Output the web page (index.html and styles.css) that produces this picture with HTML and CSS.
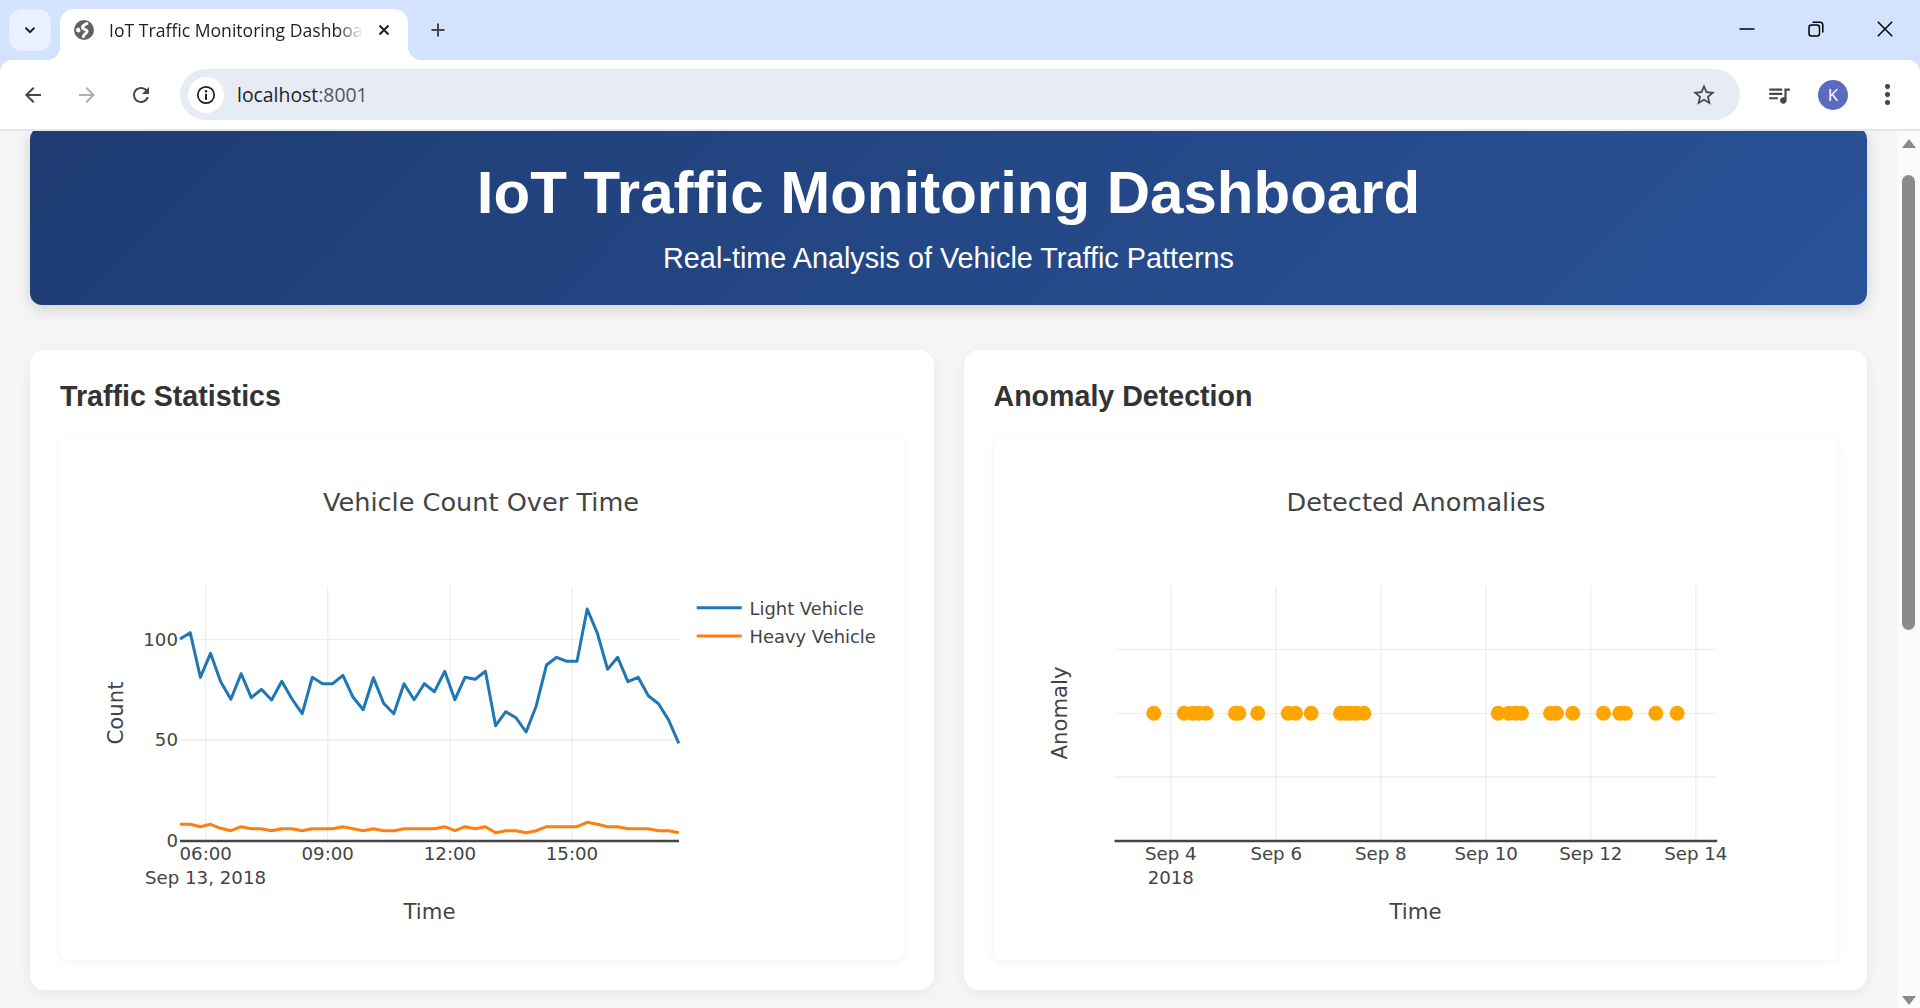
FILE: index.html
```html
<!DOCTYPE html>
<html lang="en">
  <head>
    <meta charset="UTF-8" />
    <title>IoT Traffic Monitoring Dashboard</title>
    <link rel="stylesheet" href="styles.css">
  </head>
  <body>
    <div class="tabstrip">
      <div class="tabsearch">
        <svg width="16" height="16" viewBox="0 0 16 16"><path class="chev" d="M3.5 5.8 8 10.2l4.5-4.4" /></svg>
      </div>
      <div class="tab">
        <svg class="favicon" width="20" height="20" viewBox="0 0 18 18">
          <circle cx="9" cy="9" r="9" fill="#5f6368" />
          <path class="swoosh" d="M12.500 2.600C10.500 4.200 7.600 4.400 7.600 6.600 7.600 8.800 11.400 8 11.800 10 12.200 11.800 9.200 12.400 8.600 14.400L8.200 16" />
          <path fill="#fff" d="M1.800 7.800 4.600 6.600 6 9.800 4.200 11.400 2 10.400z" />
        </svg>
        <span class="tabtitle">IoT Traffic Monitoring Dashboard</span>
        <svg class="tabclose" width="14" height="14" viewBox="0 0 14 14"><path d="M2.5 2.5l9 9M11.5 2.5l-9 9" /></svg>
      </div>
      <svg class="newtab" width="18" height="18" viewBox="0 0 18 18"><path d="M9 2.5v13M2.5 9h13" /></svg>
      <div class="wincontrols">
        <svg width="16" height="16" viewBox="0 0 16 16"><path d="M.5 8h15" /></svg>
        <svg width="16" height="16" viewBox="0 0 16 16"><rect x="1" y="4" width="10.500" height="11" rx="2.500" /><path d="M4.500 1.200h7.500a2.800 2.800 0 0 1 2.800 2.800v7.500" /></svg>
        <svg width="16" height="16" viewBox="0 0 16 16"><path d="M.8.800l14.400 14.400M15.200.800.800 15.200" /></svg>
      </div>
    </div>

    <div class="toolbar">
      <svg class="navicon" width="24" height="24" viewBox="0 0 24 24"><path d="M20 11H7.830l5.590-5.590L12 4l-8 8 8 8 1.410-1.410L7.830 13H20v-2z" /></svg>
      <svg class="navicon disabled" width="24" height="24" viewBox="0 0 24 24"><path d="M4 11h12.170l-5.590-5.590L12 4l8 8-8 8-1.410-1.410L16.170 13H4v-2z" /></svg>
      <svg class="navicon" width="24" height="24" viewBox="0 0 24 24"><path d="M17.650 6.350C16.200 4.900 14.210 4 12 4c-4.420 0-7.990 3.580-7.990 8s3.570 8 7.990 8c3.730 0 6.840-2.550 7.730-6h-2.080c-.82 2.330-3.040 4-5.650 4-3.310 0-6-2.690-6-6s2.690-6 6-6c1.660 0 3.140.69 4.220 1.780L13 11h7V4l-2.350 2.350z" /></svg>
      <div class="omnibox">
        <div class="sitechip">
          <svg width="20" height="20" viewBox="0 0 20 20">
            <circle class="ring" cx="10" cy="10" r="8.200" />
            <rect x="9" y="8.800" width="2" height="6" fill="#1f1f1f" />
            <circle cx="10" cy="6.200" r="1.200" fill="#1f1f1f" />
          </svg>
        </div>
        <span class="url">localhost<span class="port">:8001</span></span>
        <svg class="star" width="26" height="26" viewBox="0 0 24 24"><path d="M22 9.240l-7.190-.62L12 2 9.190 8.630 2 9.240l5.460 4.730L5.820 21 12 17.270 18.180 21l-1.630-7.030L22 9.240zM12 15.400l-3.760 2.270 1-4.280-3.320-2.880 4.380-.38L12 6.100l1.710 4.040 4.380.38-3.320 2.880 1 4.280L12 15.400z" /></svg>
      </div>
      <svg class="mediaicon" width="26" height="26" viewBox="0 0 24 24"><path d="M15 6H3v2h12V6zm0 4H3v2h12v-2zM3 16h8v-2H3v2zM17 6v8.180c-.31-.11-.65-.18-1-.18-1.660 0-3 1.340-3 3s1.340 3 3 3 3-1.340 3-3V8h3V6h-5z" /></svg>
      <div class="avatar">K</div>
      <div class="kebab"><i></i><i></i><i></i></div>
    </div>

    <div class="viewport">
      <div class="page">
        <header class="banner">
          <h1>IoT Traffic Monitoring Dashboard</h1>
          <p>Real-time Analysis of Vehicle Traffic Patterns</p>
        </header>

        <div class="panels">
          <section class="panel">
            <h2>Traffic Statistics</h2>
            <div class="plot">
              <svg viewBox="60 437 843.500 523">
                <text class="title" x="481" y="511">Vehicle Count Over Time</text>

                <!-- grid -->
                <path class="grid" d="M205.700 586V841M327.700 586V841M450 586V841M572 586V841M180 639.300H679M180 740H679" />

                <polyline class="line blue" points="180,639 190.200,632.700 200.400,677.300 210.500,653.300 220.700,681.700 230.900,699.300 241.100,673.700 251.300,697.700 261.400,689.300 271.600,700 281.800,681.300 292,699 302.200,713.700 312.300,677.300 322.500,683.700 332.700,683.700 342.900,675.300 353.100,697.300 363.200,709.700 373.400,677.700 383.600,703.300 393.800,713.700 404,683.700 414.100,699.700 424.300,683.700 434.500,691.700 444.700,671.300 454.900,699.700 465,677.300 475.200,679.300 485.400,671.300 495.600,725.700 505.800,711.700 515.900,717.700 526.100,732 536.300,705.700 546.500,665 556.700,657.300 566.800,661.300 577,661.300 587.200,609 597.400,633.300 607.600,669.300 617.700,657.300 627.900,681.700 638.100,677.300 648.300,695.700 658.500,703.700 668.600,720 678.800,743.300" />
                <polyline class="line orange" points="180,824.300 190.200,824.300 200.400,826.700 210.500,824.300 220.700,828.300 230.900,830.700 241.100,826.700 251.300,828.700 261.400,828.700 271.600,830.700 281.800,828.700 292,828.700 302.200,830.700 312.300,828.700 322.500,828.700 332.700,828.700 342.900,826.700 353.100,828.700 363.200,830.700 373.400,828.700 383.600,830.700 393.800,830.700 404,828.700 414.100,828.700 424.300,828.700 434.500,828.700 444.700,826.700 454.900,830.700 465,826.700 475.200,828.700 485.400,826.700 495.600,832.700 505.800,830.700 515.900,830.700 526.100,832.700 536.300,830.700 546.500,826.700 556.700,826.700 566.800,826.700 577,826.700 587.200,822.300 597.400,824.300 607.600,826.700 617.700,826.700 627.900,828.700 638.100,828.700 648.300,828.700 658.500,830.700 668.600,830.700 678.800,832.700" />

                <path class="axis" d="M180 841H679" />

                <text class="tick end" x="178" y="645.500">100</text>
                <text class="tick end" x="178" y="746">50</text>
                <text class="tick end" x="178" y="847">0</text>
                <text class="tick" x="205.700" y="860">06:00</text>
                <text class="tick" x="327.700" y="860">09:00</text>
                <text class="tick" x="450" y="860">12:00</text>
                <text class="tick" x="572" y="860">15:00</text>
                <text class="tick" x="205.500" y="884">Sep 13, 2018</text>
                <text class="axistitle" x="429.500" y="919">Time</text>
                <text class="axistitle" transform="translate(123 713) rotate(-90)">Count</text>

                <path class="legendline blue" d="M696.700 607.700H741.700" />
                <text class="legend" x="749.500" y="615">Light Vehicle</text>
                <path class="legendline orange" d="M696.700 636H741.700" />
                <text class="legend" x="749.500" y="643">Heavy Vehicle</text>
              </svg>
            </div>
          </section>

          <section class="panel">
            <h2>Anomaly Detection</h2>
            <div class="plot">
              <svg viewBox="993.500 437 843.500 523">
                <text class="title" x="1415.500" y="511">Detected Anomalies</text>

                <path class="grid" d="M1170.300 586V841M1275.700 586V841M1380.300 586V841M1485.700 586V841M1590.300 586V841M1695.300 586V841M1114 649.300H1716.700M1114 713.300H1716.700M1114 777H1716.700" />

                <g class="marks">
                  <circle cx="1153.300" cy="713.300" r="7.500" />
                  <circle cx="1183.700" cy="713.300" r="7.500" />
                  <circle cx="1192.300" cy="713.300" r="7.500" />
                  <circle cx="1198.300" cy="713.300" r="7.500" />
                  <circle cx="1205.700" cy="713.300" r="7.500" />
                  <circle cx="1235" cy="713.300" r="7.500" />
                  <circle cx="1238.300" cy="713.300" r="7.500" />
                  <circle cx="1257.300" cy="713.300" r="7.500" />
                  <circle cx="1287.700" cy="713.300" r="7.500" />
                  <circle cx="1295" cy="713.300" r="7.500" />
                  <circle cx="1310.700" cy="713.300" r="7.500" />
                  <circle cx="1340" cy="713.300" r="7.500" />
                  <circle cx="1345" cy="713.300" r="7.500" />
                  <circle cx="1350" cy="713.300" r="7.500" />
                  <circle cx="1356" cy="713.300" r="7.500" />
                  <circle cx="1363.300" cy="713.300" r="7.500" />
                  <circle cx="1497.700" cy="713.300" r="7.500" />
                  <circle cx="1508.300" cy="713.300" r="7.500" />
                  <circle cx="1515" cy="713.300" r="7.500" />
                  <circle cx="1521" cy="713.300" r="7.500" />
                  <circle cx="1550" cy="713.300" r="7.500" />
                  <circle cx="1556" cy="713.300" r="7.500" />
                  <circle cx="1572.300" cy="713.300" r="7.500" />
                  <circle cx="1603" cy="713.300" r="7.500" />
                  <circle cx="1619.300" cy="713.300" r="7.500" />
                  <circle cx="1625" cy="713.300" r="7.500" />
                  <circle cx="1655.300" cy="713.300" r="7.500" />
                  <circle cx="1676.700" cy="713.300" r="7.500" />
                </g>

                <path class="axis" d="M1114 841H1716.700" />

                <text class="tick" x="1170.300" y="860">Sep 4</text>
                <text class="tick" x="1275.700" y="860">Sep 6</text>
                <text class="tick" x="1380.300" y="860">Sep 8</text>
                <text class="tick" x="1485.700" y="860">Sep 10</text>
                <text class="tick" x="1590.300" y="860">Sep 12</text>
                <text class="tick" x="1695.300" y="860">Sep 14</text>
                <text class="tick" x="1170.300" y="884">2018</text>
                <text class="axistitle" x="1415" y="919">Time</text>
                <text class="axistitle" transform="translate(1066 713) rotate(-90)">Anomaly</text>
              </svg>
            </div>
          </section>
        </div>
      </div>

      <div class="scrollbar">
        <div class="arrow up"></div>
        <div class="thumb"></div>
        <div class="arrow down"></div>
      </div>
    </div>
  </body>
</html>
```

FILE: styles.css
```css
html,
body {
  height: 100%;
  margin: 0;
  padding: 0;
  overflow: hidden;
  background: #d3e3fd;
  font-family: "Liberation Sans", Arial, sans-serif;
  color: #333;
}

/* browser chrome */
.tabstrip {
  display: flex;
  align-items: flex-end;
  height: 60px;
  box-sizing: border-box;
}
.tabsearch {
  display: flex;
  align-items: center;
  justify-content: center;
  width: 42px;
  height: 42px;
  margin: 0 9px 9px 9px;
  background: #e9f1fe;
  border-radius: 13px;
}
.chev {
  fill: none;
  stroke: #1f1f1f;
  stroke-width: 2;
}
.tab {
  position: relative;
  z-index: 1;
  display: flex;
  align-items: center;
  width: 348px;
  height: 51px;
  box-sizing: border-box;
  padding: 0 17px 9px 14px;
  background: #fff;
  border-radius: 14px 14px 0 0;
}
.tab::before,
.tab::after {
  content: "";
  position: absolute;
  bottom: 0;
  width: 14px;
  height: 14px;
}
.tab::before {
  left: -14px;
  background: radial-gradient(circle at 0 0, transparent 14px, #fff 14.500px);
}
.tab::after {
  right: -14px;
  background: radial-gradient(circle at 100% 0, transparent 14px, #fff 14.500px);
}
.favicon {
  flex: none;
}
.swoosh {
  fill: none;
  stroke: #fff;
  stroke-width: 2.600;
}
.tabtitle {
  flex: 1;
  min-width: 0;
  margin-left: 15px;
  overflow: hidden;
  white-space: nowrap;
  font: 17.600px/22px "Open Sans", sans-serif;
  color: #1f1f1f;
  -webkit-mask-image: linear-gradient(90deg, #000 90%, transparent 100%);
  mask-image: linear-gradient(90deg, #000 90%, transparent 100%);
}
.tabclose {
  flex: none;
  margin-left: 14px;
  fill: none;
  stroke: #1f1f1f;
  stroke-width: 2;
}
.newtab {
  flex: none;
  margin: 0 0 21px 21px;
  fill: none;
  stroke: #474747;
  stroke-width: 2;
}
.wincontrols {
  display: flex;
  gap: 53px;
  margin: 0 27px 23px auto;
}
.wincontrols svg {
  fill: none;
  stroke: #000;
  stroke-width: 1.500;
}

.toolbar {
  display: flex;
  align-items: center;
  height: 71px;
  box-sizing: border-box;
  padding: 0 0 0 21px;
  background: #fff;
  border-bottom: 2px solid #e3e5e8;
  border-radius: 12px 12px 0 0;
}
.navicon {
  flex: none;
  margin-right: 30px;
  fill: #474747;
}
.navicon:nth-child(3) {
  margin-right: 27px;
}
.navicon.disabled {
  fill: #b0b0b0;
}
.omnibox {
  flex: none;
  display: flex;
  align-items: center;
  width: 1560px;
  height: 51px;
  box-sizing: border-box;
  padding: 0 23px 0 8px;
  background: #e6ebf4;
  border-radius: 26px;
}
.sitechip {
  display: flex;
  align-items: center;
  justify-content: center;
  width: 36px;
  height: 36px;
  background: #fff;
  border-radius: 18px;
}
.ring {
  fill: none;
  stroke: #1f1f1f;
  stroke-width: 1.700;
}
.url {
  flex: 1;
  margin-left: 13px;
  font: 19.400px/24px "Open Sans", sans-serif;
  color: #1f1f1f;
}
.port {
  color: #555;
}
.star {
  flex: none;
  fill: #474747;
}
.mediaicon {
  flex: none;
  margin-left: 26px;
  fill: #474747;
}
.avatar {
  flex: none;
  width: 30px;
  height: 30px;
  margin-left: 26px;
  border-radius: 50%;
  background: #5c6bc0;
  color: #fff;
  font: 17px/30px "Open Sans", sans-serif;
  text-align: center;
}
.kebab {
  flex: none;
  display: flex;
  flex-direction: column;
  gap: 3.500px;
  margin-left: 37px;
}
.kebab i {
  width: 4.500px;
  height: 4.500px;
  border-radius: 50%;
  background: #474747;
}

/* page */
.viewport {
  display: flex;
  height: 877px;
  background: #f5f5f5;
}
.page {
  flex: 1;
  min-width: 0;
  overflow: hidden;
  padding: 0 30px;
}
.banner {
  height: 178px;
  margin-top: -4px;
  box-sizing: border-box;
  padding-top: 30px;
  background: linear-gradient(135deg, #1e3c72, #2a5298);
  border-radius: 12px;
  box-shadow: 0 4px 15px rgba(0, 0, 0, 0.15);
  color: #fff;
  text-align: center;
}
.banner h1 {
  margin: 0;
  font-size: 60px;
  line-height: 72px;
  font-weight: 700;
}
.banner p {
  margin: 13px 0 0;
  font-size: 28.800px;
  line-height: 32px;
}
.panels {
  display: grid;
  grid-template-columns: 1fr 1fr;
  gap: 30px;
  margin-top: 45px;
}
.panel {
  box-sizing: border-box;
  height: 640px;
  padding: 31px 30px 30px;
  background: #fff;
  border-radius: 15px;
  box-shadow: 0 4px 15px rgba(0, 0, 0, 0.05);
}
.panel h2 {
  margin: 0 0 26px;
  font-size: 28.600px;
  line-height: 30px;
  font-weight: 700;
  color: #333;
}
.plot {
  height: 523px;
  border-radius: 8px;
  background: #fff;
  box-shadow: 0 2px 10px rgba(0, 0, 0, 0.05);
}
.plot svg {
  display: block;
  width: 100%;
  height: 100%;
}

/* chart text and marks */
.plot text {
  font-family: "DejaVu Sans", Verdana, sans-serif;
  fill: #444;
  text-anchor: middle;
}
.plot .title {
  font-size: 25.600px;
}
.plot .axistitle {
  font-size: 21.200px;
}
.plot .tick {
  font-size: 18.200px;
}
.plot .tick.end {
  text-anchor: end;
}
.plot .legend {
  font-size: 17.900px;
  text-anchor: start;
}
.grid {
  fill: none;
  stroke: #eee;
  stroke-width: 1.300;
}
.axis {
  fill: none;
  stroke: #444;
  stroke-width: 2.500;
}
.line,
.legendline {
  fill: none;
  stroke-width: 3;
  stroke-linejoin: round;
}
.blue {
  stroke: #1f77b4;
}
.orange {
  stroke: #ff7f0e;
}
.marks {
  fill: #ffa500;
}

/* scrollbar */
.scrollbar {
  flex: none;
  position: relative;
  width: 23px;
  background: #fbfbfb;
}
.thumb {
  position: absolute;
  top: 44px;
  left: 5px;
  width: 13px;
  height: 455px;
  border-radius: 7px;
  background: #8b8b8b;
}
.arrow {
  position: absolute;
  left: 5px;
  width: 0;
  height: 0;
  border-left: 7px solid transparent;
  border-right: 7px solid transparent;
}
.arrow.up {
  top: 8px;
  border-bottom: 9px solid #8b8b8b;
}
.arrow.down {
  bottom: 3px;
  border-top: 9px solid #8b8b8b;
}
```
